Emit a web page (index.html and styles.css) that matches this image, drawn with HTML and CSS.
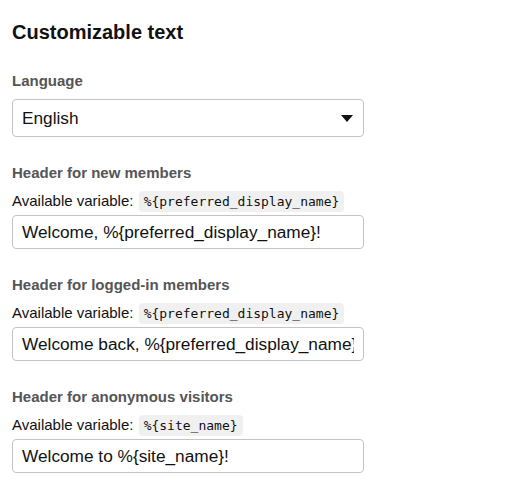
FILE: index.html
```html
<!doctype html>
<html lang="en">
<head>
    <meta charset="UTF-8">
    <meta name="viewport" content="width=device-width, initial-scale=1.0">
    <title>Customizable text</title>
    <link rel="stylesheet" href="styles.css">
</head>
<body>
    <div class="panel">
        <h2 class="title">Customizable text</h2>

        <div class="field field-select">
            <label class="label" for="language">Language</label>
            <div class="select-wrap">
                <select id="language" class="select">
                    <option>English</option>
                </select>
                <svg class="caret" width="12" height="8" viewBox="0 0 12 8"><path d="M0 0h12L6 7z" fill="#111"/></svg>
            </div>
        </div>

        <div class="field">
            <label class="label" for="newMembers">Header for new members</label>
            <div class="hint">Available variable: <code>%{preferred_display_name}</code></div>
            <input id="newMembers" class="input" type="text" value="Welcome, %{preferred_display_name}!">
        </div>

        <div class="field">
            <label class="label" for="loggedIn">Header for logged-in members</label>
            <div class="hint">Available variable: <code>%{preferred_display_name}</code></div>
            <input id="loggedIn" class="input" type="text" value="Welcome back, %{preferred_display_name}!">
        </div>

        <div class="field">
            <label class="label" for="anonymous">Header for anonymous visitors</label>
            <div class="hint">Available variable: <code>%{site_name}</code></div>
            <input id="anonymous" class="input" type="text" value="Welcome to %{site_name}!">
        </div>
    </div>
</body>
</html>
```

FILE: styles.css
```css
body {
    font-family: "Liberation Sans", Arial, sans-serif;
    margin: 0;
    background: #fff;
    color: #111;
}
.panel {
    width: 352px;
    padding: 20px 12px 0;
    display: flex;
    flex-direction: column;
}
.title {
    font-size: 20px;
    font-weight: bold;
    margin: 0 0 28px;
    line-height: 24px;
}
.field {
    display: flex;
    flex-direction: column;
    margin-bottom: 27px;
}
.field-select {
    margin-bottom: 27px;
}
.label {
    font-size: 15px;
    font-weight: bold;
    color: #555;
    line-height: 18px;
    margin-bottom: 8px;
}
.field-select .label {
    margin-bottom: 9px;
}
.hint {
    font-size: 15px;
    line-height: 22px;
    height: 22px;
    margin-bottom: 3px;
    color: #111;
}
code {
    font-family: "DejaVu Sans Mono", monospace;
    font-size: 13px;
    background: #f0f0f0;
    border-radius: 4px;
    padding: 3px 5px;
    margin-left: 1px;
}
.select-wrap {
    position: relative;
}
.select {
    width: 100%;
    height: 38px;
    appearance: none;
    -webkit-appearance: none;
    background: #fff;
    border: 1px solid #c4c4c4;
    border-radius: 4px;
    padding: 0 9px;
    font-family: inherit;
    font-size: 17.25px;
    color: #111;
}
.caret {
    position: absolute;
    right: 11px;
    top: 16px;
    pointer-events: none;
}
.input {
    box-sizing: border-box;
    width: 100%;
    height: 34px;
    border: 1px solid #c4c4c4;
    border-radius: 4px;
    padding: 0 9px;
    font-family: inherit;
    font-size: 17.25px;
    color: #111;
}
```
